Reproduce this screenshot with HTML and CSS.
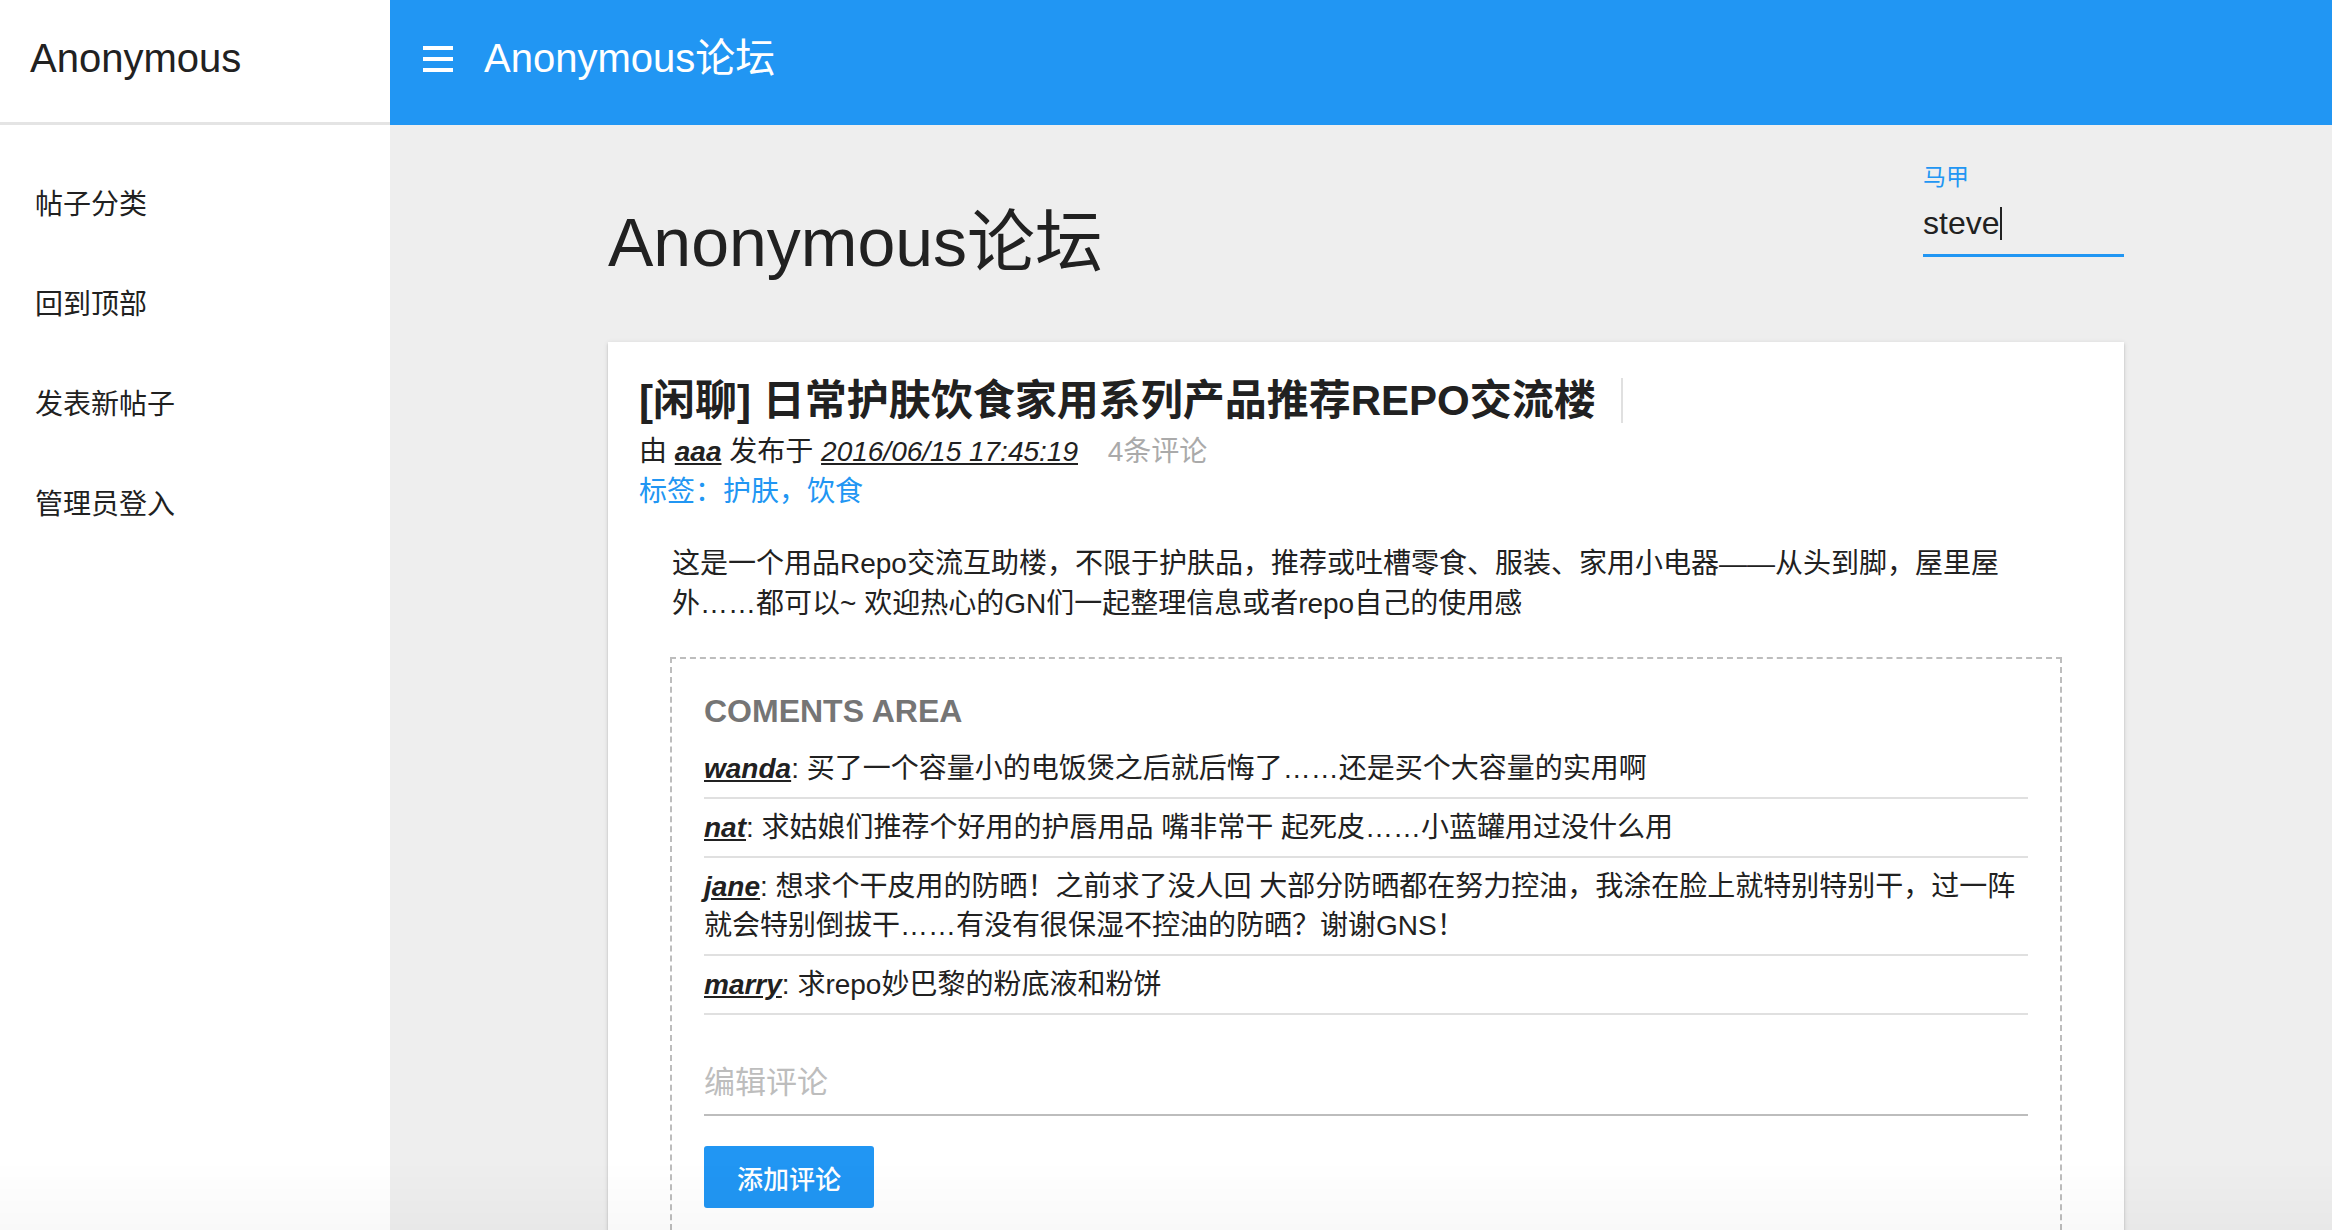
FILE: index.html
```html
<!DOCTYPE html>
<html lang="zh-CN">
<head>
<meta charset="utf-8">
<title>Anonymous论坛</title>
<link rel="stylesheet" href="styles.css">
</head>
<body>
<div class="layout">
  <aside class="drawer">
    <div class="drawer-title">Anonymous</div>
    <nav class="drawer-nav">
      <a class="nav-link">帖子分类</a>
      <a class="nav-link">回到顶部</a>
      <a class="nav-link">发表新帖子</a>
      <a class="nav-link">管理员登入</a>
    </nav>
  </aside>
  <div class="main">
    <header class="topbar">
      <svg class="menu-icon" width="30" height="26" viewBox="0 0 30 26" aria-hidden="true">
        <rect x="0" y="0" width="30" height="4" fill="#fff"/>
        <rect x="0" y="11" width="30" height="4" fill="#fff"/>
        <rect x="0" y="22" width="30" height="4" fill="#fff"/>
      </svg>
      <span class="topbar-title">Anonymous论坛</span>
    </header>
    <main class="content">
      <div class="page-head">
        <h1 class="page-title">Anonymous论坛</h1>
        <div class="alias-field">
          <label class="alias-label">马甲</label>
          <div class="alias-input">steve<span class="caret"></span></div>
        </div>
      </div>
      <article class="card">
        <h2 class="post-title">[闲聊] 日常护肤饮食家用系列产品推荐REPO交流楼</h2>
        <div class="post-meta">由 <a class="user">aaa</a> 发布于 <a class="date">2016/06/15 17:45:19</a> <span class="count">4条评论</span></div>
        <div class="post-tags">标签：护肤，饮食</div>
        <div class="post-body">
          <p class="post-text">这是一个用品Repo交流互助楼，不限于护肤品，推荐或吐槽零食、服装、家用小电器——从头到脚，屋里屋外……都可以~ 欢迎热心的GN们一起整理信息或者repo自己的使用感</p>
          <section class="comments">
            <h3 class="comments-head">COMENTS AREA</h3>
            <ul class="comment-list">
              <li class="comment"><a class="user">wanda</a>: 买了一个容量小的电饭煲之后就后悔了……还是买个大容量的实用啊</li>
              <li class="comment"><a class="user">nat</a>: 求姑娘们推荐个好用的护唇用品 嘴非常干 起死皮……小蓝罐用过没什么用</li>
              <li class="comment"><a class="user">jane</a>: 想求个干皮用的防晒！之前求了没人回 大部分防晒都在努力控油，我涂在脸上就特别特别干，过一阵就会特别倒拔干……有没有很保湿不控油的防晒？谢谢GNS！</li>
              <li class="comment"><a class="user">marry</a>: 求repo妙巴黎的粉底液和粉饼</li>
            </ul>
            <div class="comment-input">编辑评论</div>
            <button class="btn-add">添加评论</button>
          </section>
        </div>
      </article>
    </main>
  </div>
</div>
<div class="bottom-fade"></div>
</body>
</html>
```

FILE: styles.css
```css
html, body {
  margin: 0;
  padding: 0;
  height: 100%;
  overflow: hidden;
}
body {
  font-family: "Liberation Sans", "Noto Sans CJK SC", sans-serif;
  color: #212121;
  background: #eeeeee;
}
.layout {
  display: flex;
  height: 100vh;
}
.drawer {
  width: 390px;
  flex: 0 0 390px;
  background: #fff;
  display: flex;
  flex-direction: column;
}
.drawer-title {
  box-sizing: border-box;
  height: 125px;
  flex-shrink: 0;
  padding: 38px 0 0 30px;
  font-size: 40px;
  line-height: 40px;
  border-bottom: 3px solid #e4e4e4;
}
.drawer-nav {
  display: flex;
  flex-direction: column;
  padding: 30px 0 0 35px;
}
.nav-link {
  display: block;
  height: 100px;
  line-height: 100px;
  font-size: 28px;
  color: #212121;
  white-space: nowrap;
}
.main {
  flex: 1;
  display: flex;
  flex-direction: column;
  min-width: 0;
}
.topbar {
  box-sizing: border-box;
  height: 125px;
  flex-shrink: 0;
  background: #2196f3;
  color: #fff;
  display: flex;
  align-items: flex-start;
  padding: 38px 0 0 33px;
}
.menu-icon {
  margin-top: 8px;
  margin-right: 31px;
  flex: 0 0 auto;
}
.topbar-title {
  font-size: 40px;
  line-height: 40px;
}
.content {
  flex-shrink: 0;
  padding-left: 218px;
  width: 1516px;
}
.page-head {
  display: flex;
  justify-content: space-between;
  align-items: flex-start;
}
.page-title {
  margin: 77px 0 0 0;
  font-size: 68px;
  line-height: 80px;
  font-weight: 400;
  white-space: nowrap;
}
.alias-field {
  width: 201px;
  margin-top: 41px;
}
.alias-label {
  display: block;
  font-size: 23px;
  line-height: 22px;
  color: #2196f3;
}
.alias-input {
  margin-top: 15px;
  font-size: 32px;
  line-height: 40px;
  padding-bottom: 11px;
  border-bottom: 3px solid #2196f3;
  display: flex;
  align-items: center;
}
.caret {
  display: inline-block;
  width: 2px;
  height: 33px;
  background: #222;
  margin-left: 1px;
}
.card {
  margin-top: 60px;
  background: #fff;
  padding: 36px 31px 40px 31px;
  min-height: 1000px;
  box-shadow: 0 2px 2px 0 rgba(0,0,0,.14), 0 3px 1px -2px rgba(0,0,0,.2), 0 1px 5px 0 rgba(0,0,0,.12);
}
.post-title {
  display: inline-block;
  margin: 0;
  font-size: 42px;
  line-height: 45px;
  font-weight: 700;
  padding-right: 25px;
  border-right: 2px solid #e0e0e0;
  white-space: nowrap;
}
.post-meta {
  margin-top: 9px;
  font-size: 28px;
  line-height: 40px;
  color: #212121;
}
.user {
  font-weight: 700;
  font-style: italic;
  text-decoration: underline;
  color: #212121;
}
.date {
  font-style: italic;
  text-decoration: underline;
  color: #212121;
}
.count {
  color: #aaaaaa;
  margin-left: 22px;
}
.post-tags {
  font-size: 28px;
  line-height: 40px;
  color: #2196f3;
}
.post-body {
  margin: 32px 31px 0 31px;
}
.post-text {
  margin: 0;
  padding-left: 2px;
  font-size: 28px;
  line-height: 40px;
}
.comments {
  margin-top: 33px;
  border: 2px dashed #bdbdbd;
  padding: 32px 32px 40px 32px;
}
.comments-head {
  margin: 0 0 9px 0;
  font-size: 32px;
  line-height: 40px;
  font-weight: 700;
  color: #757575;
}
.comment-list {
  list-style: none;
  margin: 0;
  padding: 0;
}
.comment {
  font-size: 28px;
  line-height: 39px;
  padding: 9px 0;
  border-bottom: 2px solid #e0e0e0;
}
.comment-input {
  margin-top: 48px;
  font-size: 31px;
  line-height: 40px;
  color: #bdbdbd;
  padding-bottom: 11px;
  border-bottom: 2px solid #bdbdbd;
}
.btn-add {
  margin-top: 30px;
  height: 62px;
  padding: 0 33px;
  border: none;
  border-radius: 3px;
  background: #2196f3;
  color: #fff;
  font-family: "Liberation Sans", "Noto Sans CJK SC", sans-serif;
  font-size: 26px;
  font-weight: 500;
}
.bottom-fade {
  position: fixed;
  left: 0;
  right: 0;
  bottom: 0;
  height: 70px;
  pointer-events: none;
  background: linear-gradient(to bottom, rgba(0,0,0,0), rgba(0,0,0,0.025));
}
```
